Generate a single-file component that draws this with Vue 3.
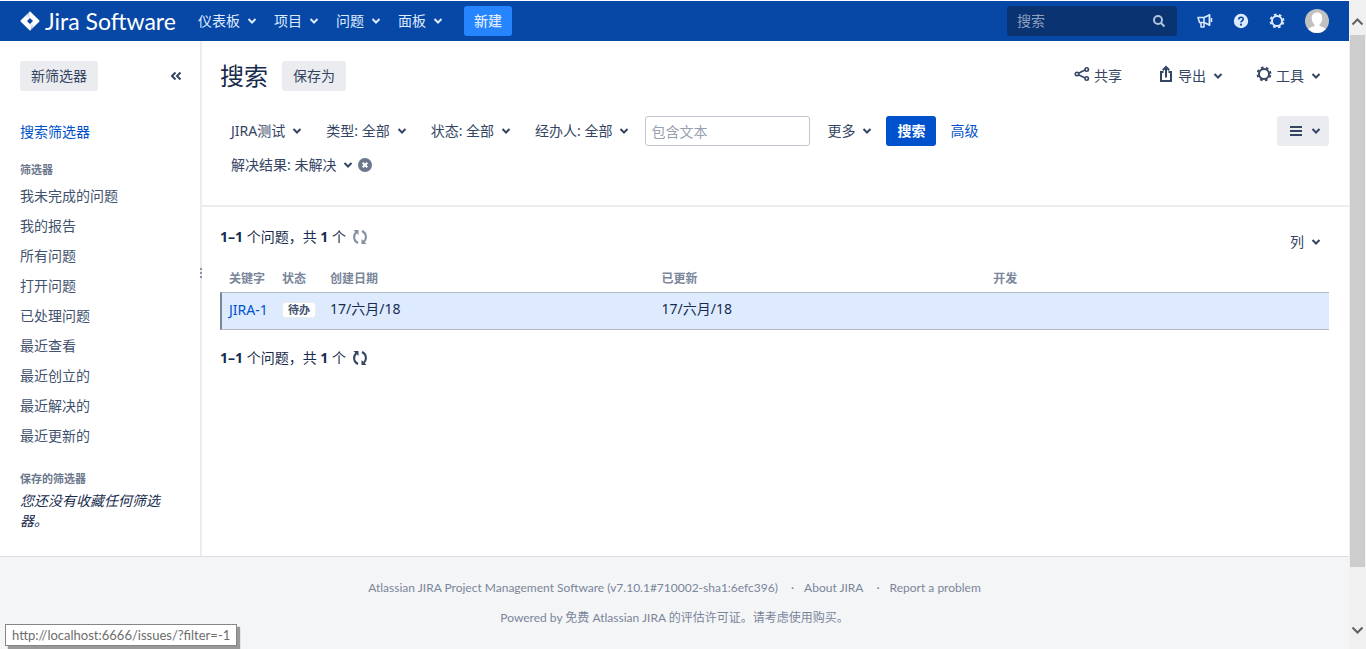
<script setup>
import { ref } from 'vue'

const menus = ['仪表板', '项目', '问题', '面板']
const filters = ['我未完成的问题', '我的报告', '所有问题', '打开问题', '已处理问题', '最近查看', '最近创立的', '最近解决的', '最近更新的']
const criteria = ['JIRA测试', '类型: 全部', '状态: 全部', '经办人: 全部']
const quickSearch = ref('')
const textQuery = ref('')
</script>

<template>
  <div class="window">
    <div class="page">
      <header class="topbar">
        <a class="logo" href="#">
          <svg width="20" height="20" viewBox="0 0 20 20" aria-hidden="true">
            <defs>
              <linearGradient id="fadeA" x1="10" y1="3" x2="6" y2="8" gradientUnits="userSpaceOnUse">
                <stop offset="0" stop-color="#0747a6" stop-opacity=".5" /><stop offset="1" stop-color="#fff" stop-opacity="0" />
              </linearGradient>
              <linearGradient id="fadeB" x1="10" y1="17" x2="14" y2="12" gradientUnits="userSpaceOnUse">
                <stop offset="0" stop-color="#0747a6" stop-opacity=".5" /><stop offset="1" stop-color="#fff" stop-opacity="0" />
              </linearGradient>
            </defs>
            <path fill="#fff" fill-rule="evenodd" d="M10 .3 19.2 9.2Q20 10 19.2 10.8L10 19.7.8 10.8Q0 10 .8 9.200ZM10 7 7 10 10 13 13 10Z" />
            <path fill="url(#fadeA)" d="M10 .5Q7.500 3.500 10 7L7 10 4.500 6Z" />
            <path fill="url(#fadeB)" d="M10 19.500Q12.500 16.500 10 13L13 10 15.500 14Z" />
          </svg>
          <span>Jira Software</span>
        </a>
        <nav class="menus">
          <button v-for="m in menus" :key="m" type="button" class="menu">
            {{ m }}
            <svg class="chev" width="10" height="8" viewBox="0 0 10 8"><path d="M1.500 2 5 5.500 8.500 2" /></svg>
          </button>
        </nav>
        <button type="button" class="create">新建</button>
        <div class="tools">
          <label class="quick">
            <input v-model="quickSearch" type="text" placeholder="搜索" aria-label="搜索" />
            <svg width="14" height="14" viewBox="0 0 14 14"><circle cx="6" cy="6" r="4" /><path d="M9 9 12.500 12.500" /></svg>
          </label>
          <button type="button" class="round" aria-label="反馈">
            <svg width="16" height="16" viewBox="0 0 16 16" fill="none" stroke="#deebff" stroke-width="1.500" stroke-linejoin="round">
              <path d="M1 4.500H7L12.500 2V12L7 9.500H2.500L1 4.500Z" /><path d="M7 4.500V9.500M4 9.500V14H7V10M14.500 5V9M12.500 1V13" />
            </svg>
          </button>
          <button type="button" class="round" aria-label="帮助">
            <svg width="16" height="16" viewBox="0 0 16 16">
              <circle cx="8" cy="8" r="7.200" fill="#deebff" />
              <path d="M5.800 6.500C5.800 3.500 10.300 3.600 10.200 6.200C10.200 7.800 8 7.700 8 9.500" fill="none" stroke="#0747a6" stroke-width="1.600" />
              <circle cx="8" cy="11.700" r="1.100" fill="#0747a6" />
            </svg>
          </button>
          <button type="button" class="round" aria-label="设置">
            <svg width="16" height="16" viewBox="0 0 16 16" fill="none" stroke="#deebff">
              <circle cx="8" cy="8" r="5" stroke-width="2" />
              <circle cx="8" cy="8" r="6.500" stroke-width="1.800" stroke-dasharray="2.600 2.505" stroke-dashoffset="-1.200" />
            </svg>
          </button>
          <button type="button" class="avatar" aria-label="用户">
            <svg width="24" height="24" viewBox="0 0 24 24">
              <clipPath id="face"><circle cx="12" cy="12" r="12" /></clipPath>
              <g clip-path="url(#face)">
                <path fill="#c1c1c1" d="M0 0H24V24H0Z" />
                <path fill="#fff" d="M12 3.500C15.500 3.500 17.500 6 17.300 9.500C17.100 12.500 15.800 14.500 14.500 15.500V17C17 17.800 19.500 18.700 21 20.500V24H3V20.500C4.500 18.700 7 17.800 9.500 17V15.500C8.200 14.500 6.900 12.500 6.700 9.500C6.500 6 8.500 3.500 12 3.500Z" />
              </g>
            </svg>
          </button>
        </div>
      </header>

      <div class="body">
        <aside class="side">
          <div class="side-top">
            <button type="button" class="btn">新筛选器</button>
            <button type="button" class="collapse" aria-label="收起">
              <svg width="12" height="10" viewBox="0 0 12 10"><path d="M5.500 1.500 2 5 5.500 8.500M10.500 1.500 7 5 10.500 8.500" /></svg>
            </button>
          </div>
          <a class="find" href="#">搜索筛选器</a>
          <h2 class="group">筛选器</h2>
          <ul class="list">
            <li v-for="f in filters" :key="f"><a href="#">{{ f }}</a></li>
          </ul>
          <h2 class="group saved">保存的筛选器</h2>
          <p class="none">您还没有收藏任何筛选器。</p>
          <span class="grip"><i></i><i></i><i></i></span>
        </aside>

        <main class="main">
          <section class="query">
            <div class="title-row">
              <h1>搜索</h1>
              <button type="button" class="btn">保存为</button>
              <div class="actions">
                <button type="button" class="action share">
                  <svg width="16" height="16" viewBox="0 0 16 16" fill="none" stroke="#344563" stroke-width="1.600">
                    <path d="M4.500 7.200 11 4M4.500 8.800 11 12" /><circle cx="3" cy="8" r="1.700" /><circle cx="12.700" cy="3.500" r="1.700" /><circle cx="12.700" cy="12.500" r="1.700" />
                  </svg>
                  <span>共享</span>
                </button>
                <button type="button" class="action">
                  <svg width="16" height="18" viewBox="0 0 16 18" fill="none" stroke="#344563" stroke-width="2">
                    <path d="M5.500 7H3V16H13V7H10.500M8 12.500V2.500M4.800 5.200 8 2 11.200 5.200" />
                  </svg>
                  <span>导出</span>
                  <svg class="chev" width="10" height="8" viewBox="0 0 10 8"><path d="M1.500 2 5 5.500 8.500 2" /></svg>
                </button>
                <button type="button" class="action">
                  <svg width="16" height="16" viewBox="0 0 16 16" fill="none" stroke="#344563">
                    <circle cx="8" cy="8" r="5" stroke-width="2" />
                    <circle cx="8" cy="8" r="6.500" stroke-width="1.800" stroke-dasharray="2.600 2.505" stroke-dashoffset="-1.200" />
                  </svg>
                  <span>工具</span>
                  <svg class="chev" width="10" height="8" viewBox="0 0 10 8"><path d="M1.500 2 5 5.500 8.500 2" /></svg>
                </button>
              </div>
            </div>
            <form class="criteria" @submit.prevent>
              <button v-for="c in criteria" :key="c" type="button" class="crit">
                {{ c }}
                <svg class="chev" width="10" height="8" viewBox="0 0 10 8"><path d="M1.500 2 5 5.500 8.500 2" /></svg>
              </button>
              <input v-model="textQuery" class="text" type="text" placeholder="包含文本" aria-label="包含文本" />
              <button type="button" class="crit more">
                更多
                <svg class="chev" width="10" height="8" viewBox="0 0 10 8"><path d="M1.500 2 5 5.500 8.500 2" /></svg>
              </button>
              <button type="submit" class="go">搜索</button>
              <a class="advanced" href="#">高级</a>
              <button type="button" class="btn view" aria-label="视图">
                <svg width="12" height="10" viewBox="0 0 12 10"><path d="M0 0H12V2H0ZM0 4H12V6H0ZM0 8H12V10H0Z" fill="#344563" /></svg>
                <svg class="chev" width="10" height="8" viewBox="0 0 10 8"><path d="M1.500 2 5 5.500 8.500 2" /></svg>
              </button>
            </form>
            <div class="extra">
              <button type="button" class="crit">
                解决结果: 未解决
                <svg class="chev" width="10" height="8" viewBox="0 0 10 8"><path d="M1.500 2 5 5.500 8.500 2" /></svg>
              </button>
              <button type="button" class="remove" aria-label="移除">
                <svg width="14" height="14" viewBox="0 0 14 14"><circle cx="7" cy="7" r="7" fill="#6b778c" /><path d="M4.700 4.700 9.300 9.300M9.300 4.700 4.700 9.300" stroke="#fff" stroke-width="2" /></svg>
              </button>
            </div>
          </section>

          <section class="results">
            <div class="count-row">
              <p class="count"><b>1–1</b> 个问题，共 <b>1</b> 个
                <svg class="refresh pale" width="16" height="16" viewBox="0 0 16 16"><path d="M6 14C1.500 12 .8 6.500 4.300 3.300M10 2C14.500 4 15.200 9.500 11.700 12.700" /><path class="head" d="M1.500 1H6.500V6ZM14.500 15H9.500V10Z" /></svg>
              </p>
              <button type="button" class="crit columns">
                列
                <svg class="chev" width="10" height="8" viewBox="0 0 10 8"><path d="M1.500 2 5 5.500 8.500 2" /></svg>
              </button>
            </div>
            <table>
              <thead>
                <tr>
                  <th class="c-key" scope="col">关键字</th>
                  <th class="c-status" scope="col">状态</th>
                  <th class="c-date" scope="col">创建日期</th>
                  <th class="c-date" scope="col">已更新</th>
                  <th scope="col">开发</th>
                </tr>
              </thead>
              <tbody>
                <tr>
                  <td><a href="#">JIRA-1</a></td>
                  <td><span class="lozenge">待办</span></td>
                  <td>17/六月/18</td>
                  <td>17/六月/18</td>
                  <td></td>
                </tr>
              </tbody>
            </table>
            <p class="count bottom"><b>1–1</b> 个问题，共 <b>1</b> 个
              <svg class="refresh" width="16" height="16" viewBox="0 0 16 16"><path d="M6 14C1.500 12 .8 6.500 4.300 3.300M10 2C14.500 4 15.200 9.500 11.700 12.700" /><path class="head" d="M1.500 1H6.500V6ZM14.500 15H9.500V10Z" /></svg>
            </p>
          </section>
        </main>
      </div>

      <footer class="foot">
        <ul>
          <li>Atlassian JIRA Project Management Software (v7.10.1#710002-sha1:6efc396)</li>
          <li><a href="#">About JIRA</a></li>
          <li><a href="#">Report a problem</a></li>
        </ul>
        <p>Powered by 免费 Atlassian JIRA 的评估许可证。请考虑使用购买。</p>
      </footer>
    </div>

    <div class="scroll" aria-hidden="true">
      <svg width="11" height="8" viewBox="0 0 11 8"><path d="M.5 6.500 5.500 1.500 10.500 6.500" /></svg>
      <div class="track"><div class="thumb"></div></div>
      <svg width="11" height="8" viewBox="0 0 11 8"><path d="M.5 1.500 5.500 6.500 10.500 1.500" /></svg>
    </div>
    <div class="status">http://localhost:6666/issues/?filter=-1</div>
  </div>
</template>

<style>
body { margin: 0; background: #fff; }
</style>

<style scoped>
.window {
  position: relative;
  display: flex;
  min-height: 100vh;
  font: 14px/20px "Noto Sans", "Noto Sans CJK SC", sans-serif;
  color: #172b4d;
}
.window * { box-sizing: border-box; }
button, input { font: inherit; color: inherit; }
button { border: 0; padding: 0; background: none; cursor: pointer; white-space: nowrap; }
a { color: #0052cc; text-decoration: none; }
h1, h2, p, ul { margin: 0; padding: 0; }
ul { list-style: none; }
svg { display: block; flex: none; }
.page { flex: 1; min-width: 0; display: flex; flex-direction: column; }
.chev { fill: none; stroke: currentColor; stroke-width: 2; }

.topbar {
  display: flex;
  align-items: center;
  height: 41px;
  padding: 0 20px;
  border-top: 1px solid #fff;
  background: #0747a6;
  color: #deebff;
}
.logo { display: flex; align-items: center; gap: 5px; color: #fff; font: 23px/30px Lato, sans-serif; white-space: nowrap; }
.menus { display: flex; gap: 16px; margin-left: 22px; }
.menu { display: flex; align-items: center; gap: 7px; height: 30px; padding-right: 1px; }
.create { height: 30px; padding: 0 10px; margin-left: 20px; border-radius: 3px; background: #2684ff; font-weight: 500; }
.tools { display: flex; align-items: center; margin-left: auto; }
.quick { display: flex; align-items: center; width: 170px; height: 30px; padding: 0 11px 0 10px; margin-right: 20px; border-radius: 3px; background: #093371; }
.quick input { flex: 1; min-width: 0; padding: 0; border: 0; outline: 0; background: none; }
.quick input::placeholder { color: #8f9fbf; opacity: 1; }
.quick svg { fill: none; stroke: #b3c3df; stroke-width: 2; }
.round { margin-right: 20px; }

.body { display: flex; }
.side { position: relative; flex: none; width: 202px; padding: 20px 18px 25px 20px; border-right: 2px solid #ebecf0; }
.side-top { display: flex; align-items: center; justify-content: space-between; }
.btn { height: 30px; padding: 0 11px; border-radius: 3px; background: #ebecf0; color: #344563; }
.collapse svg { fill: none; stroke: #344563; stroke-width: 2; }
.find { display: block; margin-top: 31px; }
.group { margin-top: 20px; font-size: 11px; line-height: 16px; font-weight: 700; color: #6b778c; }
.list { margin-top: 3px; line-height: 30px; }
.list a { color: #42526e; }
.none { margin-top: 4px; font-style: italic; }
.grip { position: absolute; right: -2px; top: 227px; display: flex; flex-direction: column; gap: 2px; }
.grip i { width: 2px; height: 2px; background: #8993a4; }

.main { flex: 1; min-width: 0; }
.query { padding: 20px 20px 25px 18px; border-bottom: 2px solid #ebecf0; color: #344563; }
.title-row { display: flex; align-items: center; }
h1 { margin-right: 14px; font-size: 24px; line-height: 30px; font-weight: 400; color: #172b4d; }
.actions { display: flex; gap: 33px; margin-left: auto; padding-right: 8px; }
.action { display: flex; align-items: center; gap: 4px; }
.action svg:first-child { margin-bottom: 4px; }
.action .chev { margin-left: 3px; }
.share { margin-right: 3px; }
.criteria { display: flex; align-items: center; margin-top: 25px; }
.crit { display: flex; align-items: center; gap: 7px; height: 30px; padding: 0 10px; margin-right: 4px; }
.criteria .crit:first-child { margin-left: 1px; }
.text { width: 165px; height: 30px; margin-left: 2px; padding: 0 5px; border: 1px solid #c1c7d0; border-radius: 3px; background: #fff; }
.text::placeholder { color: #97a0af; opacity: 1; }
.more { margin-left: 7px; }
.go { height: 30px; padding: 0 11px; border-radius: 3px; background: #0052cc; color: #fff; font-weight: 700; }
.advanced { margin-left: 14px; }
.view { display: flex; align-items: center; gap: 9px; padding: 0 8px 0 13px; margin-left: auto; }
.extra { display: flex; align-items: center; margin: 4px 0 0 1px; }
.extra .crit { padding-right: 1px; }

.results { padding: 20px 20px 0 18px; }
.count-row { display: flex; justify-content: space-between; }
.count { display: flex; align-items: center; white-space: pre; }
.count-row .count { height: 20px; }
.refresh { margin-left: 2px; fill: none; stroke: #344563; stroke-width: 2; }
.refresh .head { fill: #344563; stroke: none; }
.pale { opacity: .6; }
.columns { padding: 0 8px; margin: 0; color: #344563; }
table { width: 100%; margin-top: 5px; border-collapse: separate; border-spacing: 0; table-layout: fixed; }
th { height: 30px; padding: 4px 0 0 7px; text-align: left; font-size: 12px; line-height: 20px; color: #7a869a; }
td { height: 38px; padding: 0 0 4px 7px; background: #deebff; border: 0 solid #b3bac5; border-width: 1px 0; line-height: 20px; }
th:first-child { padding-left: 9px; }
td:first-child { border-left: 2px solid #7a869a; padding-bottom: 2px; }
.c-key { width: 55px; }
.c-status { width: 48px; }
.c-date { width: 29.9%; }
.lozenge { display: inline-block; padding: 0 5px; border: 1px solid #ebecf0; border-radius: 3px; background: #fff; color: #42526e; font-size: 11px; line-height: 14px; font-weight: 700; vertical-align: middle; }
.bottom { margin-top: 18px; }

.foot { flex: 1; padding: 21px 10px; border-top: 1px solid #dcdee2; background: #f4f5f7; color: #7a869a; font-family: Lato, "Noto Sans CJK SC", sans-serif; font-size: 12px; line-height: 20px; text-align: center; }
.foot a { color: inherit; }
.foot ul { display: flex; justify-content: center; margin-bottom: 10px; }
.foot li + li::before { content: "·"; margin: 0 10px 0 13px; }

.scroll { display: flex; flex-direction: column; align-items: center; flex: none; width: 17px; padding: 18px 0 15px; background: #f0f0f0; }
.scroll svg { fill: none; stroke: #606060; stroke-width: 2; }
.track { flex: 1; width: 15px; padding-top: 9px; }
.thumb { height: 90%; background: #cdcdcd; }
.status { position: absolute; left: 5px; bottom: 3px; padding: 0 6px; border: 1px solid #868686; background: #fff; box-shadow: 3px 3px 1px #999; color: #6d6d6d; font: 13px/20px Lato, sans-serif; }
</style>
